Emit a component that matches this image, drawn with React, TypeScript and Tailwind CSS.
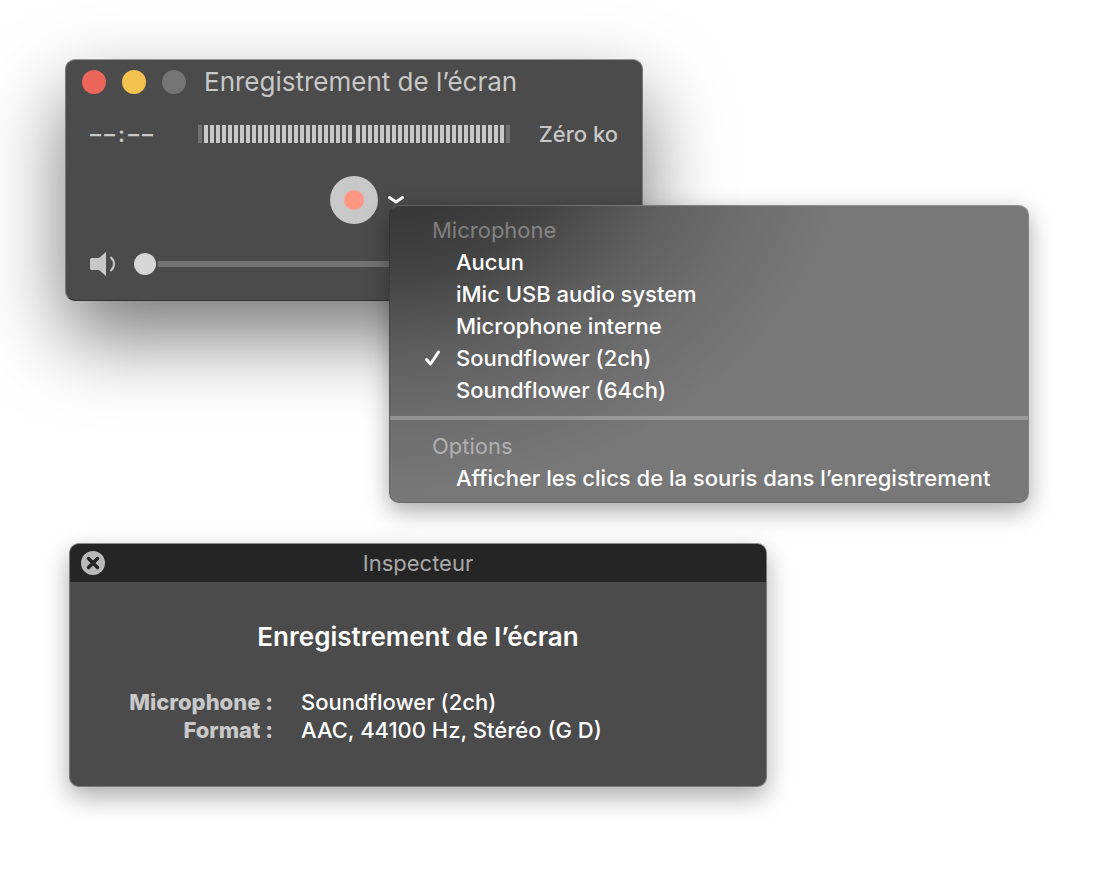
import { useState } from "react";

const MICROPHONES = [
  "Aucun",
  "iMic USB audio system",
  "Microphone interne",
  "Soundflower (2ch)",
  "Soundflower (64ch)",
];

const BARS = Array.from({ length: 26 }, (_, i) => i);

function Meter() {
  return (
    <div className="flex gap-1" role="img" aria-label="Niveau audio">
      <div className="flex gap-0.5">
        {BARS.map((i) => (
          <span key={i} className={`h-[18px] w-1 ${i === 0 ? "bg-[#707070]" : "bg-[#c8c8c8]"}`} />
        ))}
      </div>
      <div className="flex gap-0.5">
        {BARS.map((i) => (
          <span key={i} className={`h-[18px] w-1 ${i === 25 ? "bg-[#707070]" : "bg-[#c8c8c8]"}`} />
        ))}
      </div>
    </div>
  );
}

function MicrophoneMenu({ selected, onSelect }: { selected: string; onSelect: (name: string) => void }) {
  const [showClicks, setShowClicks] = useState(false);

  return (
    <div
      role="menu"
      className="absolute left-[323px] top-[145px] z-10 w-max min-w-[640px] rounded-[10px] border border-t-white/20 border-b-black/10 border-l-black/15 border-r-white/10 bg-[#787878] bg-[radial-gradient(460px_370px_at_0_-80px,#393939_25%,#434343_40%,#505050_50%,#606060_63%,#6d6d6d_80%,#787878)] bg-origin-border pb-2 pt-2 text-[22px] font-medium leading-8 text-white shadow-[0_8px_24px_rgba(0,0,0,0.35)]"
    >
      <p className="pl-[42px] font-normal text-white/35">Microphone</p>
      {MICROPHONES.map((name) => (
        <button
          key={name}
          role="menuitemradio"
          aria-checked={name === selected}
          onClick={() => onSelect(name)}
          className="flex w-full items-center pl-[34px] pr-9 text-left"
        >
          <span className="w-8">
            {name === selected && (
              <svg width="18" height="18" viewBox="0 0 18 18" fill="none" stroke="currentColor" strokeWidth="3" strokeLinecap="round" strokeLinejoin="round">
                <path d="M2.5 10.5 6.5 15 14.5 3" />
              </svg>
            )}
          </span>
          {name}
        </button>
      ))}
      <hr className="mb-2.5 mt-2.5 border-t-4 border-white/25" />
      <p className="pl-[42px] font-normal text-white/45">Options</p>
      <button
        role="menuitemcheckbox"
        aria-checked={showClicks}
        onClick={() => setShowClicks(!showClicks)}
        className="block w-full pl-[66px] pr-9 text-left"
      >
        Afficher les clics de la souris dans l’enregistrement
      </button>
    </div>
  );
}

function Recorder({ microphone, onSelect }: { microphone: string; onSelect: (name: string) => void }) {
  const [open, setOpen] = useState(true);
  const [volume, setVolume] = useState(0);

  return (
    <section className="relative w-full max-w-[578px] rounded-[10px] border border-[#7a7a7a] border-t-[#9a9a9a] border-b-[#303030] bg-[#4b4b4b] pb-[9px] text-[#c8c8c8] shadow-[0_36px_80px_rgba(0,0,0,0.53)]">
      <header className="flex h-11 items-center gap-4 px-4">
        <button aria-label="Fermer" className="size-6 rounded-full bg-[#ec6559]" />
        <button aria-label="Réduire" className="size-6 rounded-full bg-[#f5c250]" />
        <button aria-label="Agrandir" disabled className="size-6 rounded-full bg-[#757575]" />
        <h1 className="pl-0.5 text-[26px] leading-8">Enregistrement de l’écran</h1>
      </header>

      <div className="mt-px flex h-[58px] items-center px-6 text-[22px] font-medium">
        <span className="flex w-[108px] gap-[3px] font-semibold">
          {["–", "–", ":", "–", "–"].map((char, i) => (
            <span key={i}>{char}</span>
          ))}
        </span>
        <Meter />
        <span className="ml-auto">Zéro ko</span>
      </div>

      <div className="grid h-[74px] grid-cols-[1fr_auto_1fr] items-center">
        <button
          aria-label="Enregistrer"
          className="col-start-2 flex size-12 items-center justify-center rounded-full bg-[#c8c8c8]"
        >
          <span className="size-5 rounded-full bg-[#ff9785]" />
        </button>
        <button
          aria-label="Options d’enregistrement"
          aria-expanded={open}
          onClick={() => setOpen(!open)}
          className="ml-2.5 w-4 text-white"
        >
          <svg width="16" height="10" viewBox="0 0 16 10" fill="none" stroke="currentColor" strokeWidth="3" strokeLinecap="round" strokeLinejoin="round">
            <path d="M1.5 2.5 8 7 14.5 2.5" />
          </svg>
        </button>
      </div>

      <div className="flex h-[54px] items-center gap-[18px] pl-6 pr-8">
        <svg width="26" height="24" viewBox="0 0 26 24" fill="none" className="shrink-0">
          <path d="M1.5 6H9L16 0V24L9 18H1.5Q0 18 0 16.5V7.5Q0 6 1.5 6Z" fill="#c8c8c8" />
          <path d="M20.5 5Q24 8 24 12T20.5 19" stroke="#c8c8c8" strokeWidth="2" />
        </svg>
        <input
          type="range"
          aria-label="Volume"
          value={volume}
          onChange={(e) => setVolume(Number(e.target.value))}
          className="h-6 min-w-0 flex-1 appearance-none bg-transparent [&::-webkit-slider-runnable-track]:h-1.5 [&::-webkit-slider-runnable-track]:bg-[#737373] [&::-webkit-slider-thumb]:-mt-2 [&::-webkit-slider-thumb]:size-[22px] [&::-webkit-slider-thumb]:appearance-none [&::-webkit-slider-thumb]:rounded-full [&::-webkit-slider-thumb]:bg-[#d6d6d6] [&::-webkit-slider-thumb]:shadow-[0_0_0_2px_#4b4b4b]"
        />
      </div>

      {open && <MicrophoneMenu selected={microphone} onSelect={onSelect} />}
    </section>
  );
}

function Inspector({ microphone }: { microphone: string }) {
  return (
    <section className="ml-1 mt-[242px] w-full max-w-[698px] overflow-hidden rounded-[10px] border border-[#7a7a7a] border-t-[#8a8a8a] bg-[#4b4b4b] shadow-[0_10px_26px_rgba(0,0,0,0.33)]">
      <header className="grid h-[38px] grid-cols-[1fr_auto_1fr] items-center bg-[#252525] px-[11px]">
        <button aria-label="Fermer l’inspecteur" className="size-6">
          <svg width="24" height="24" viewBox="0 0 24 24">
            <circle cx="12" cy="12" r="12" fill="#b9b9b9" />
            <path d="M7.5 7.5 16.5 16.5M16.5 7.5 7.5 16.5" stroke="#252525" strokeWidth="3.5" strokeLinecap="round" />
          </svg>
        </button>
        <h2 className="text-[22px] leading-8 text-[#a8a8a8]">Inspecteur</h2>
      </header>
      <div className="pb-[42px] pt-[39px] text-white">
        <h3 className="text-center text-[26px] font-semibold leading-8">Enregistrement de l’écran</h3>
        <dl className="mt-[35px] grid grid-cols-[203px_1fr] gap-x-7 text-[22px] font-medium leading-7">
          <dt className="text-right font-extrabold text-[#c8c8c8]">Microphone :</dt>
          <dd>{microphone}</dd>
          <dt className="text-right font-extrabold text-[#c8c8c8]">Format :</dt>
          <dd>AAC, 44100 Hz, Stéréo (G D)</dd>
        </dl>
      </div>
    </section>
  );
}

export default function App() {
  const [microphone, setMicrophone] = useState("Soundflower (2ch)");

  return (
    <main className="min-h-screen overflow-hidden bg-white px-[65px] pb-[100px] pt-[59px] font-['Inter',sans-serif]">
      <Recorder microphone={microphone} onSelect={setMicrophone} />
      <Inspector microphone={microphone} />
    </main>
  );
}
